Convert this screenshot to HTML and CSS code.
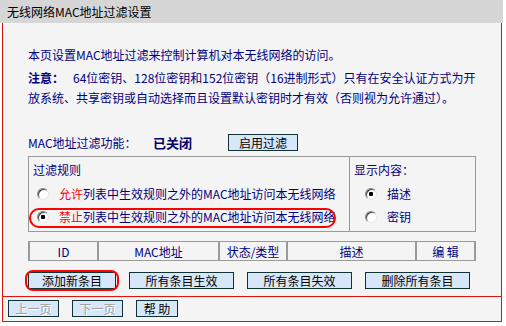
FILE: index.html
```html
<!DOCTYPE html>
<html lang="zh-CN">
<head>
    <meta charset="UTF-8">
    <title>无线网络MAC地址过滤设置</title>
    <link rel="stylesheet" href="styles.css">
</head>
<body>
    <div class="page">
        <div class="title">无线网络MAC地址过滤设置</div>
        <div class="main">
            <div class="content">
                <p class="intro">本页设置MAC地址过滤来控制计算机对本无线网络的访问。</p>
                <p class="note"><b>注意：</b><span class="gap"></span>64位密钥、128位密钥和152位密钥（16进制形式）只有在安全认证方式为开<br>放系统、共享密钥或自动选择而且设置默认密钥时才有效（否则视为允许通过）。</p>

                <div class="status-row">
                    <span class="label">MAC地址过滤功能：</span>
                    <span class="state">已关闭</span>
                    <button class="btn btn-enable">启用过滤</button>
                </div>

                <div class="rules">
                    <div class="rules-left">
                        <div class="box-title">过滤规则</div>
                        <label class="opt">
                            <input type="radio" name="rule">
                            <span><span class="red">允许</span>列表中生效规则之外的MAC地址访问本无线网络</span>
                        </label>
                        <label class="opt">
                            <input type="radio" name="rule" checked>
                            <span><span class="red">禁止</span>列表中生效规则之外的MAC地址访问本无线网络</span>
                            <span class="ring ring-rule"></span>
                        </label>
                    </div>
                    <div class="rules-right">
                        <div class="box-title">显示内容：</div>
                        <label class="opt">
                            <input type="radio" name="show" checked>
                            <span>描述</span>
                        </label>
                        <label class="opt">
                            <input type="radio" name="show">
                            <span>密钥</span>
                        </label>
                    </div>
                </div>

                <table class="list">
                    <tr>
                        <th class="c-id">ID</th>
                        <th class="c-mac">MAC地址</th>
                        <th class="c-type">状态/类型</th>
                        <th class="c-desc">描述</th>
                        <th class="c-edit">编 辑</th>
                    </tr>
                </table>

                <div class="actions">
                    <span class="circled"><button class="btn btn-add">添加新条目</button></span>
                    <button class="btn btn-wide">所有条目生效</button>
                    <button class="btn btn-wide">所有条目失效</button>
                    <button class="btn btn-wide">删除所有条目</button>
                </div>
            </div>

            <div class="pager">
                <button class="btn btn-page" disabled>上一页</button>
                <button class="btn btn-page" disabled>下一页</button>
                <button class="btn btn-help">帮 助</button>
            </div>
        </div>
    </div>
</body>
</html>
```

FILE: styles.css
```css
* {
    margin: 0;
    padding: 0;
    box-sizing: border-box;
}

body {
    font-family: "Noto Sans CJK SC", sans-serif;
    font-size: 12px;
    color: #000080;
    background-color: #fff;
}

.page {
    width: 503px;
}

.title {
    height: 23px;
    line-height: 23px;
    padding-left: 7px;
    background-color: #d6d6d6;
    color: #000;
}

.main {
    width: 500px;
    margin-left: 2px;
    background-color: #f4f4f4;
    border: 1px solid #e0140c;
    border-top: none;
}

.content {
    padding: 22px 0 7px 25px;
    border-bottom: 1px solid #e0140c;
}

.content p {
    line-height: 20px;
}

.note {
    margin-top: 3px;
}

.note b {
    font-weight: bold;
}

.gap {
    display: inline-block;
    width: 9px;
}

.status-row {
    display: flex;
    align-items: center;
    height: 18px;
    margin-top: 25px;
}

.label {
    width: 125px;
}

.state {
    width: 75px;
    font-size: 13px;
    font-weight: bold;
    color: #000066;
}

.rules {
    display: flex;
    width: 448px;
    margin-top: 5px;
    border: 1px solid #9a9a9a;
}

.rules-left {
    width: 321px;
    padding: 0 0 3px 4px;
    border-right: 1px solid #9a9a9a;
}

.rules-right {
    flex: 1;
    padding: 0 0 3px 4px;
}

.box-title {
    height: 25px;
    line-height: 25px;
}

.opt {
    position: relative;
    display: flex;
    align-items: center;
    height: 23px;
    padding-left: 4px;
}

.rules-right .opt {
    padding-left: 11px;
}

.opt input {
    appearance: none;
    width: 12px;
    height: 12px;
    margin-right: 10px;
    border-radius: 50%;
    border: 1px solid;
    border-color: #8a8a8a #e8e8e8 #e8e8e8 #8a8a8a;
    background-color: #fff;
    box-shadow: inset 1px 1px 0 #404040;
}

.opt input:checked {
    background: radial-gradient(circle, #000 0, #000 2px, #fff 2.5px);
}

.red {
    color: #f00;
}

.ring {
    position: absolute;
    border: 2px solid #f00;
    border-radius: 10px;
    pointer-events: none;
}

.ring-rule {
    left: -4px;
    top: 3px;
    width: 307px;
    height: 20px;
}

.list {
    width: 448px;
    margin-top: 9px;
    border-collapse: separate;
    border-spacing: 0;
    border: 1px solid #9a9a9a;
}

.list th {
    height: 18px;
    font-weight: normal;
    text-align: center;
    border: 1px solid #9a9a9a;
    border-width: 0 1px 0 1px;
}

.c-id { width: 69px; }
.c-mac { width: 121px; }
.c-type { width: 68px; }
.c-desc { width: 129px; }

.actions {
    display: flex;
    align-items: center;
    margin-top: 11px;
    gap: 13px;
}

.btn {
    height: 17px;
    font-family: "Noto Sans CJK SC", sans-serif;
    font-size: 12px;
    line-height: 15px;
    color: #000;
    background-color: #d8e6fa;
    border: 1px solid #0f3333;
}

.btn-enable {
    width: 70px;
}

.circled {
    position: relative;
    display: inline-block;
    height: 17px;
}

.circled::after {
    content: "";
    position: absolute;
    left: -3px;
    right: -3px;
    top: -2px;
    bottom: -2px;
    border: 2px solid #f00;
    border-radius: 8px;
}

.btn-add {
    width: 88px;
}

.btn-wide {
    width: 105px;
}

.pager {
    display: flex;
    gap: 13px;
    padding: 3px 0 4px 5px;
}

.btn-page {
    width: 51px;
}

.btn-page:disabled {
    color: #a0a0a0;
    text-shadow: 1px 1px 0 #fff;
}

.btn-help {
    width: 42px;
}
```
